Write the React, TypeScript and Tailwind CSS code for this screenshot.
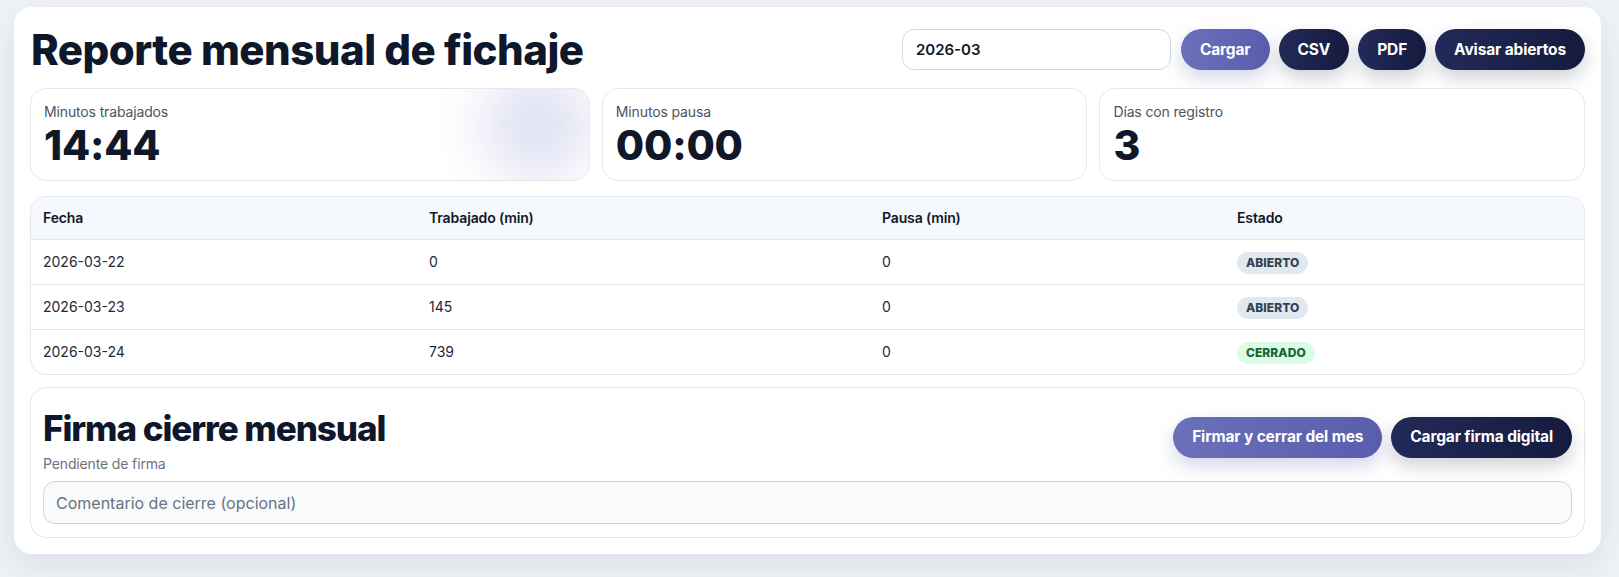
import React from 'react';

const rows = [
  { fecha: '2026-03-22', trabajado: 0, pausa: 0, estado: 'ABIERTO' },
  { fecha: '2026-03-23', trabajado: 145, pausa: 0, estado: 'ABIERTO' },
  { fecha: '2026-03-24', trabajado: 739, pausa: 0, estado: 'CERRADO' },
];

const stats = [
  { label: 'Minutos trabajados', value: '14:44', glow: true },
  { label: 'Minutos pausa', value: '00:00' },
  { label: 'Días con registro', value: '3' },
];

const PrimaryBtn = ({ children }: { children: React.ReactNode }) => (
  <button className="h-[41px] px-[19px] rounded-full text-[15.5px] font-bold text-white tracking-[-0.01em] bg-gradient-to-r from-[#6c70ba] to-[#585ead] shadow-[0_8px_18px_rgba(88,94,173,0.25)]">
    {children}
  </button>
);

const DarkBtn = ({ children }: { children: React.ReactNode }) => (
  <button className="h-[41px] px-[19px] rounded-full text-[15.5px] font-bold text-white tracking-[-0.01em] bg-gradient-to-r from-[#222a58] to-[#151b3e] shadow-[0_8px_18px_rgba(21,27,62,0.2)]">
    {children}
  </button>
);

const Badge = ({ estado }: { estado: string }) => (
  <span
    className={`inline-flex items-center h-[22px] px-[9px] rounded-full text-[12px] font-extrabold tracking-[0.005em] ${
      estado === 'CERRADO' ? 'bg-[#dcfce7] text-[#166534]' : 'bg-[#e2e8f0] text-[#334155]'
    }`}
  >
    {estado}
  </span>
);

export default function App() {
  return (
    <div className="min-h-screen bg-[#eef2f7] pl-[14px] pt-[7px] pb-6" style={{ fontFamily: 'Inter, "Noto Sans", sans-serif' }}>
      <div className="w-[1587px] bg-white rounded-[18px] p-4 shadow-[0_12px_32px_rgba(15,23,42,0.08)]">
        {/* header */}
        <div className="flex items-center justify-between h-[53px]">
          <h1 className="text-[42px] leading-[52px] font-extrabold tracking-[-0.012em] text-[#0f172a] pl-[1px]">
            Reporte mensual de fichaje
          </h1>
          <div className="flex items-center gap-[9px]">
            <input
              defaultValue="2026-03"
              className="w-[269px] h-[41px] mr-[1px] rounded-xl border border-[#d4d8e0] px-[13px] text-[15px] font-semibold text-[#111827] outline-none"
            />
            <PrimaryBtn>Cargar</PrimaryBtn>
            <DarkBtn>CSV</DarkBtn>
            <DarkBtn>PDF</DarkBtn>
            <DarkBtn>Avisar abiertos</DarkBtn>
          </div>
        </div>

        {/* stats */}
        <div className="grid grid-cols-[1.153fr_1fr_1fr] gap-3 mt-3">
          {stats.map((s) => (
            <div key={s.label} className="relative overflow-hidden h-[93px] rounded-2xl border border-[#e5e7eb] bg-white px-[13px] pt-[13px]">
              {s.glow && (
                <div className="absolute right-[-4px] top-[-20px] w-[112px] h-[112px] rounded-full bg-[#c9cbea] opacity-55 blur-[26px]" />
              )}
              <div className="relative text-sm text-[#4b5563] leading-5 tracking-[-0.01em]">{s.label}</div>
              <div className="relative text-[41px] leading-[46px] font-extrabold text-[#0f172a] tracking-[-0.005em]">{s.value}</div>
            </div>
          ))}
        </div>

        {/* table */}
        <div className="mt-[15px] rounded-2xl border border-[#e5e7eb] overflow-hidden">
          <table className="w-full table-fixed border-collapse text-left">
            <colgroup>
              <col className="w-[386px]" />
              <col className="w-[453px]" />
              <col className="w-[355px]" />
              <col />
            </colgroup>
            <thead>
              <tr className="h-[42px] bg-[#f5f8fc]">
                {['Fecha', 'Trabajado (min)', 'Pausa (min)', 'Estado'].map((h) => (
                  <th key={h} className="px-3 text-[14px] font-semibold text-[#0f172a] tracking-[-0.01em]">{h}</th>
                ))}
              </tr>
            </thead>
            <tbody>
              {rows.map((r) => (
                <tr key={r.fecha} className="h-[45px] border-t border-[#e5e7eb]">
                  <td className="px-3 text-[14px] text-[#1f2937]">{r.fecha}</td>
                  <td className="px-3 text-[14px] text-[#1f2937]">{r.trabajado}</td>
                  <td className="px-3 text-[14px] text-[#1f2937]">{r.pausa}</td>
                  <td className="px-3"><Badge estado={r.estado} /></td>
                </tr>
              ))}
            </tbody>
          </table>
        </div>

        {/* firma */}
        <div className="mt-3 rounded-2xl border border-[#e5e7eb] px-3 pt-3 pb-[13px]">
          <div className="flex items-center justify-between">
            <div>
              <h2 className="pt-[6px] text-[35px] leading-[44px] font-extrabold tracking-[-0.03em] text-[#0f172a]">
                Firma cierre mensual
              </h2>
              <p className="mt-1 text-sm leading-5 text-[#6b7280] tracking-[-0.01em]">Pendiente de firma</p>
            </div>
            <div className="flex items-center gap-[9px]">
              <PrimaryBtn>Firmar y cerrar del mes</PrimaryBtn>
              <DarkBtn>Cargar firma digital</DarkBtn>
            </div>
          </div>
          <input
            placeholder="Comentario de cierre (opcional)"
            className="mt-[7px] w-full h-[43px] rounded-xl border border-[#d1d5db] bg-[#f8fafc] px-3 text-[16px] text-[#111827] placeholder:text-[#6b7280] outline-none"
          />
        </div>
      </div>
    </div>
  );
}
